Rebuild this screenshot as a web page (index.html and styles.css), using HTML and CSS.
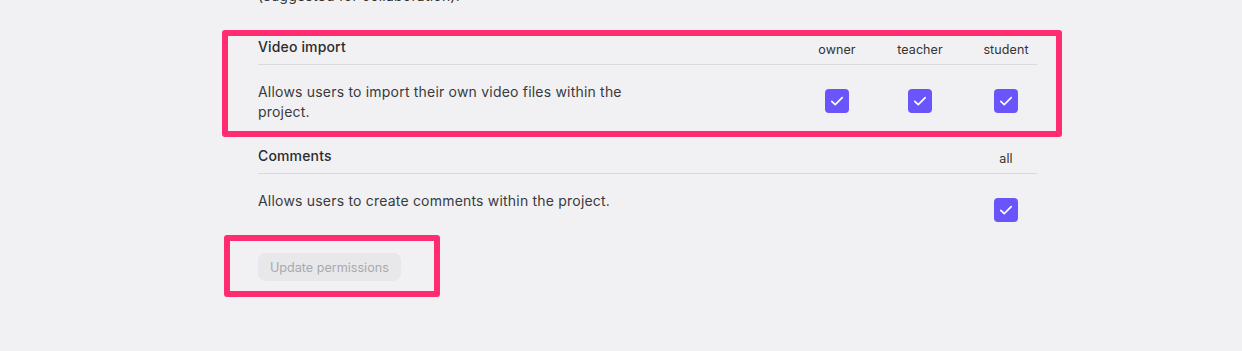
FILE: index.html
```html
<!DOCTYPE html>
<html lang="en">

<head>
    <meta charset="UTF-8">
    <meta name="viewport" content="width=device-width, initial-scale=1.0">
    <title>Project permissions</title>
    <link rel="stylesheet" href="styles.css">
</head>

<body>
    <div class="permissions">
        <p class="cut-text">(suggested for collaboration).</p>

        <div class="perm-section">
            <div class="perm-header">
                <span class="perm-title">Video import</span>
                <span class="role">owner</span>
                <span class="role">teacher</span>
                <span class="role">student</span>
            </div>
            <div class="perm-body">
                <p class="perm-desc">Allows users to import their own video files within the project.</p>
                <span class="checkbox"><svg viewBox="0 0 24 24"><path d="M6.8 12.4l3.4 3.3 7-7"/></svg></span>
                <span class="checkbox"><svg viewBox="0 0 24 24"><path d="M6.8 12.4l3.4 3.3 7-7"/></svg></span>
                <span class="checkbox"><svg viewBox="0 0 24 24"><path d="M6.8 12.4l3.4 3.3 7-7"/></svg></span>
            </div>
        </div>

        <div class="perm-section">
            <div class="perm-header">
                <span class="perm-title">Comments</span>
                <span></span>
                <span></span>
                <span class="role">all</span>
            </div>
            <div class="perm-body">
                <p class="perm-desc">Allows users to create comments within the project.</p>
                <span></span>
                <span></span>
                <span class="checkbox"><svg viewBox="0 0 24 24"><path d="M6.8 12.4l3.4 3.3 7-7"/></svg></span>
            </div>
        </div>

        <button class="update-btn" disabled>Update permissions</button>
    </div>

    <!-- annotation boxes -->
    <div class="highlight highlight-video"></div>
    <div class="highlight highlight-button"></div>
</body>

</html>
```

FILE: styles.css
```css
body {
    margin: 0;
    background-color: #f1f1f4;
    font-family: Inter, "Noto Sans", sans-serif;
    color: #333;
    height: 351px;
    overflow: hidden;
    position: relative;
}

.permissions {
    width: 779px;
    margin-left: 258px;
}

.cut-text {
    margin: -14px 0 0 0;
    font-size: 14px;
    line-height: 20px;
    letter-spacing: 0.2px;
    padding-bottom: 19px;
}

.perm-header,
.perm-body {
    display: grid;
    grid-template-columns: 1fr 56px 62px 62px;
    column-gap: 24px;
}

.perm-header {
    align-items: end;
    padding: 12px 0 7px;
    border-bottom: 1px solid #d9d9de;
}

.perm-title {
    font-size: 14px;
    line-height: 20px;
    font-weight: 500;
    letter-spacing: 0.15px;
    color: #2b2b2e;
}

.role {
    font-size: 12.5px;
    line-height: 15px;
    letter-spacing: 0.1px;
    text-align: center;
    color: #333;
}

.perm-body {
    padding: 17px 0 12px;
    align-items: start;
}

.perm-desc {
    margin: 0;
    max-width: 400px;
    font-size: 14px;
    line-height: 20px;
    letter-spacing: 0.2px;
    color: #3a3a3d;
}

.checkbox {
    justify-self: center;
    margin-top: 7px;
    width: 24px;
    height: 24px;
    border-radius: 4px;
    background-color: #6a54fb;
    display: flex;
}

.checkbox svg {
    width: 24px;
    height: 24px;
    fill: none;
    stroke: #fff;
    stroke-width: 1.7;
    stroke-linecap: round;
    stroke-linejoin: round;
}

.update-btn {
    margin-top: 19px;
    height: 28px;
    padding: 0 12px;
    border: none;
    border-radius: 8px;
    background-color: #e8e8eb;
    color: #a9a9ad;
    font-family: inherit;
    font-size: 12.6px;
}

.highlight {
    position: absolute;
    border: 6px solid #ff2d6f;
    border-radius: 3px;
    box-sizing: border-box;
}

.highlight-video {
    left: 222px;
    top: 30px;
    width: 840px;
    height: 107px;
}

.highlight-button {
    left: 224px;
    top: 235px;
    width: 216px;
    height: 62px;
}
```
